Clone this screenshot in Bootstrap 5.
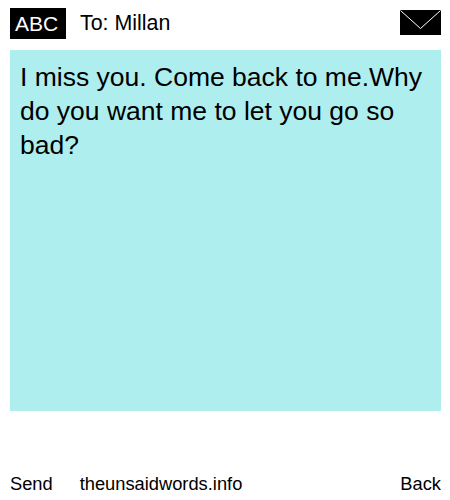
<!DOCTYPE html>
<html lang="en">
<head>
<meta charset="utf-8">
<title>The Unsaid Words</title>
<link href="https://cdn.jsdelivr.net/npm/bootstrap@5.3.0/dist/css/bootstrap.min.css" rel="stylesheet">
<style>
html, body { height: 500px; margin: 0; background: #fff; color: #000; font-family: "Liberation Sans", Arial, sans-serif; overflow: hidden; }
.page-wrap { height: 500px; padding: 8px 9px 3px 10px; }
.top-bar { height: 31px; margin-bottom: 11px; font-size: 21.4px; }
.abc-tag { width: 56px; height: 31px; padding-left: 5px; background: #000; color: #fff; font-size: 21px; }
.to-line { margin-left: 14px; }
.env-icon { display: block; margin-top: -2px; }
.msg-box { height: 361px; background: #afeeee; padding: 10px; font-size: 26.5px; line-height: 34px; }
.foot-bar { margin-top: auto; font-size: 18.3px; }
.foot-link { margin-left: 27px; }
</style>
</head>
<body>
<div class="page-wrap d-flex flex-column">
  <div class="top-bar d-flex align-items-center">
    <div class="abc-tag d-flex align-items-center">ABC</div>
    <div class="to-line flex-grow-1">To: Millan</div>
    <svg class="env-icon" width="41" height="25" viewBox="0 0 41 25" role="img" aria-label="Envelope">
      <rect width="41" height="25" fill="#000"/>
      <path d="M0.5 0.5 L20.5 18.5 L40.5 0.5" fill="none" stroke="#fff" stroke-width="1"/>
    </svg>
  </div>
  <div class="msg-box">I miss you. Come back to me.Why do you want me to let you go so bad?</div>
  <div class="foot-bar d-flex">
    <span>Send</span>
    <span class="foot-link flex-grow-1">theunsaidwords.info</span>
    <span>Back</span>
  </div>
</div>
<script src="https://cdn.jsdelivr.net/npm/bootstrap@5.3.0/dist/js/bootstrap.bundle.min.js"></script>
</body>
</html>
